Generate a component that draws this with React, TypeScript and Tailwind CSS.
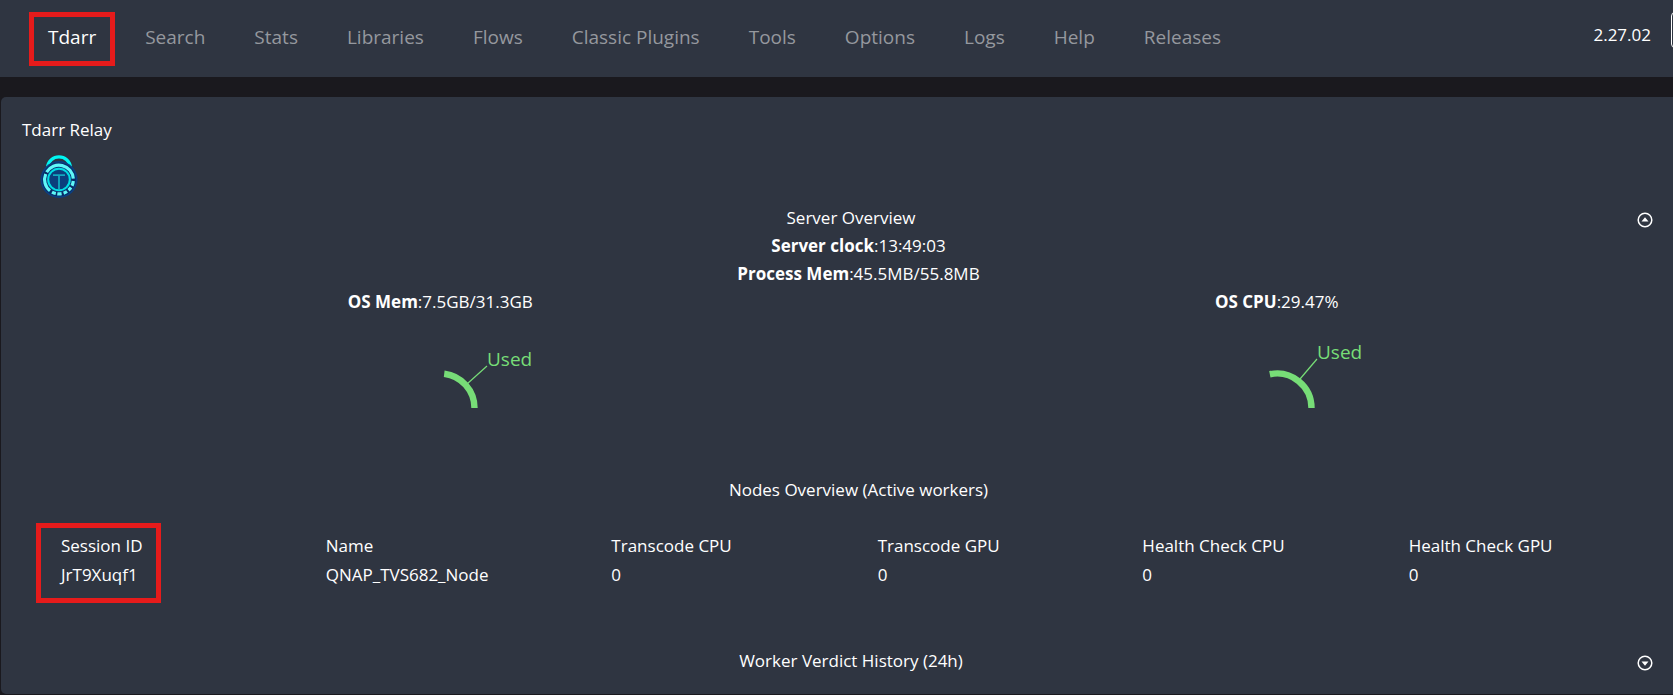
const links = ['Tdarr', 'Search', 'Stats', 'Libraries', 'Flows', 'Classic Plugins', 'Tools', 'Options', 'Logs', 'Help', 'Releases'];

const columns = [
  { title: 'Session ID', value: 'JrT9Xuqf1', width: 'w-[16.4%]' },
  { title: 'Name', value: 'QNAP_TVS682_Node', width: 'w-[17.7%]' },
  { title: 'Transcode CPU', value: '0', width: 'w-[16.5%]' },
  { title: 'Transcode GPU', value: '0', width: 'w-[16.4%]' },
  { title: 'Health Check CPU', value: '0', width: 'w-[16.5%]' },
  { title: 'Health Check GPU', value: '0', width: 'w-[16.5%]' },
];

function Logo() {
  return (
    <svg viewBox="0 0 38 44" className="h-11 w-[38px]" aria-hidden="true">
      <path d="M7.5 13 A11.6 11.6 0 0 1 30.5 13" fill="none" stroke="#00f6f2" strokeWidth="3.2" />
      <circle cx="19" cy="25.5" r="18.5" fill="#0c3f80" />
      <circle cx="19" cy="25.5" r="14.6" fill="none" stroke="#082c66" strokeWidth="4.4" />
      <g fill="none" stroke="#5ff8f8" strokeWidth="3.2">
        <path d="M6.6 18.2 A14.4 14.4 0 0 1 33.3 24.6" />
        <path d="M5.7 20 A14.4 14.4 0 0 0 10 36.8" />
        <path d="M12 38.1 A14.4 14.4 0 0 0 15.8 39.5" />
        <path d="M17.3 39.8 A14.4 14.4 0 0 0 21.6 39.7" />
        <path d="M23.6 39.2 A14.4 14.4 0 0 0 27 37.5" />
        <path d="M28.5 36.2 A14.4 14.4 0 0 0 31 33.5" />
        <path d="M32 31.7 A14.4 14.4 0 0 0 33.3 27" />
      </g>
      <circle cx="19" cy="25.5" r="10.8" fill="#0b3f7c" stroke="#00dfe4" strokeWidth="2" />
      <path d="M13 21.2 H25 M19 21.2 V35" fill="none" stroke="#11a9bf" strokeWidth="1.8" />
    </svg>
  );
}

function ToggleButton({ open, label }: { open: boolean; label: string }) {
  return (
    <button type="button" aria-label={label} aria-expanded={open} className="mr-[42px] mt-1 shrink-0">
      <svg viewBox="0 0 16 16" className="size-4" aria-hidden="true">
        <circle cx="8" cy="8" r="6.8" fill="none" stroke="#fff" strokeWidth="1.5" />
        <path d={open ? 'M8 5.2 L11.5 9.5 H4.5 Z' : 'M8 10.8 L11.5 6.5 H4.5 Z'} fill="#fff" />
      </svg>
    </button>
  );
}

function Stat({ name, value }: { name: string; value: string }) {
  return (
    <p className="text-center">
      <strong className="font-bold">{name}</strong>:{value}
    </p>
  );
}

type GaugeProps = { degrees: number; line: string; labelX: number; labelY: number };

function Gauge({ degrees, line, labelX, labelY }: GaugeProps) {
  const a = (degrees * Math.PI) / 180;
  const r = 34.5;
  return (
    <svg viewBox="-100 -92 200 160" className="mx-auto h-40 w-[200px]">
      <path
        d={`M${r * Math.cos(a)} ${-r * Math.sin(a)} A${r} ${r} 0 0 1 ${r} 0`}
        fill="none"
        stroke="#77dd77"
        strokeWidth="6.4"
      />
      <path d={line} stroke="#77dd77" strokeWidth="1.2" />
      <text x={labelX} y={labelY} fill="#77dd77" className="text-[19px]">
        Used
      </text>
    </svg>
  );
}

export default function App() {
  return (
    <div className="min-h-screen overflow-hidden bg-[#1a191e] font-['Open_Sans','Noto_Sans',sans-serif] text-[17px] leading-7 text-white">
      <header className="flex h-[77px] items-start justify-between bg-[#2f3541]">
        <nav className="flex gap-[49px] whitespace-nowrap pl-12 pt-[23px] text-[19px]">
          {links.map((name, i) => (
            <a key={name} href="#" className={i === 0 ? 'relative text-white' : 'text-[#95989e]'}>
              {name}
              {i === 0 && <span className="absolute -inset-x-[19px] -bottom-[15px] -top-[11px] border-5 border-[#e61b1b]" />}
            </a>
          ))}
        </nav>
        <div className="-mr-[43px] flex shrink-0 gap-5 pt-3">
          <span className="mt-[9px]">2.27.02</span>
          <button type="button" aria-label="Account" className="h-9 w-[45px] rounded border border-white" />
        </div>
      </header>

      <main className="-mr-[43px] ml-px mt-5 rounded-[5px] bg-[#2f3541] px-[21px] pb-[19px] pt-[19px]">
        <p>Tdarr Relay</p>
        <a href="#" aria-label="Tdarr Relay" className="ml-[18px] mt-[10px] block w-[38px]">
          <Logo />
        </a>

        <section className="mt-[6px]">
          <div className="flex">
            <h2 className="flex-1 text-center">Server Overview</h2>
            <div className="-ml-[43px] flex">
              <ToggleButton open label="Server Overview" />
            </div>
          </div>
          <Stat name="Server clock" value="13:49:03" />
          <Stat name="Process Mem" value="45.5MB/55.8MB" />
          <div className="grid grid-cols-2">
            <div>
              <Stat name="OS Mem" value="7.5GB/31.3GB" />
              <Gauge degrees={83} line="M27 -24 L47 -42" labelX={47} labelY={-42} />
            </div>
            <div>
              <Stat name="OS CPU" value="29.47%" />
              <Gauge degrees={102} line="M23 -29 L40 -49" labelX={40} labelY={-49} />
            </div>
          </div>
        </section>

        <section>
          <h2 className="text-center">Nodes Overview (Active workers)</h2>
          <div className="ml-[39px] mr-5 mt-7">
            <table className="w-full table-fixed text-left">
              <thead>
                <tr>
                  {columns.map((c, i) => (
                    <th key={c.title} className={`${c.width} relative p-0 font-normal`}>
                      {c.title}
                      {i === 0 && <span className="absolute -left-[25px] -top-[9px] h-20 w-[125px] border-5 border-[#e61b1b]" />}
                    </th>
                  ))}
                </tr>
              </thead>
              <tbody>
                <tr>
                  {columns.map((c) => (
                    <td key={c.title} className="p-0 pt-px">{c.value}</td>
                  ))}
                </tr>
              </tbody>
            </table>
          </div>
        </section>

        <section className="mt-[58px] flex">
          <h2 className="flex-1 text-center">Worker Verdict History (24h)</h2>
          <div className="-ml-[43px] flex">
            <ToggleButton open={false} label="Worker Verdict History" />
          </div>
        </section>
      </main>
    </div>
  );
}
